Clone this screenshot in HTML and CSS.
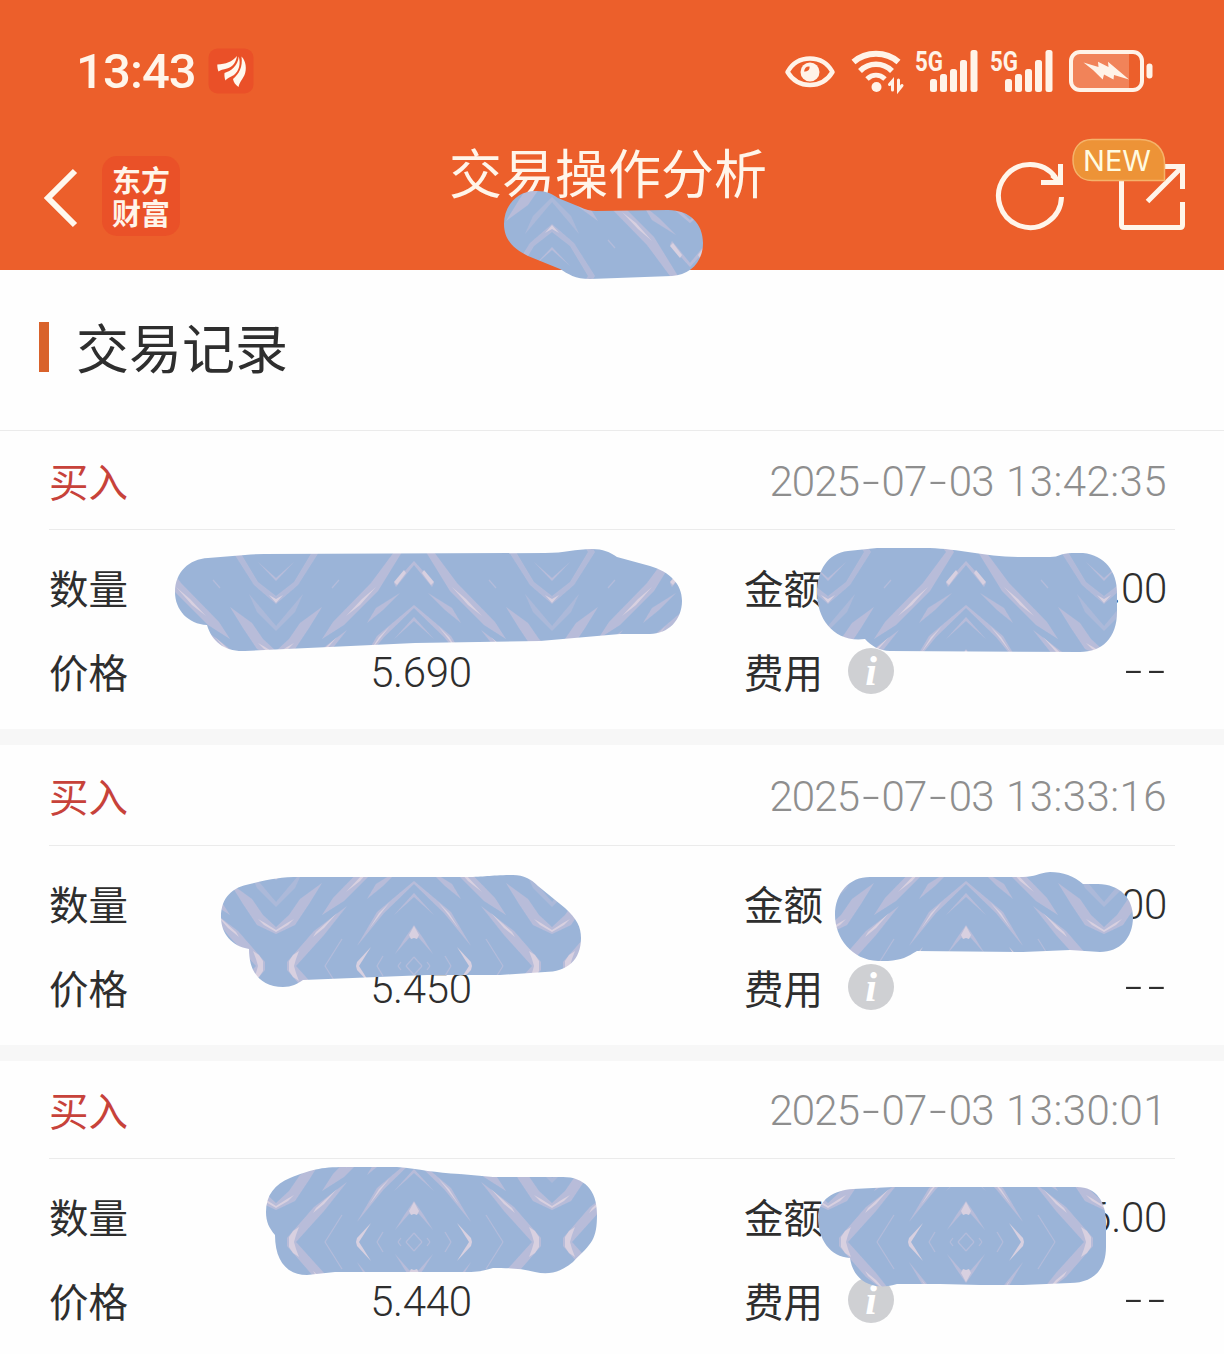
FILE: index.html
```html
<!DOCTYPE html>
<html lang="zh-CN">
<head>
<meta charset="utf-8">
<title>交易操作分析</title>
<link rel="stylesheet" href="styles.css">
</head>
<body>
<div class="screen">
  <header class="header">
    <div class="status">
      <span class="clock">13:43</span>
      <svg class="app-badge" width="46" height="46" viewBox="0 0 46 46"><rect width="45" height="45" x=".5" y=".5" rx="9" fill="#ea5028"/><g fill="#fff8ee"><path d="M9.300 16.500C18 16 24 14 29 8C28 14 25 19 19 20.500C15 21.500 12.500 22 10.500 23.500C9.500 21 9.300 19 9.300 16.500Z"/><path d="M16.500 25C23 23 30 18 30.700 8.500C33 16 31 23 26 27C22 29.500 19 30 17.500 32.500C16.500 30 16.300 27.500 16.500 25Z"/><path d="M25 31C31 26 35 19 33.500 8.500C38 13 39 21 36.500 27C34.500 31.500 31.500 34 30.500 39C27.500 37 25.500 34 25 31Z"/></g></svg>
      <svg class="indicators" width="370" height="46" viewBox="0 0 370 46">
        <g fill="none" stroke="#fff3e8" stroke-linecap="round">
          <path d="M3.500 24C9 14 17 10.500 26 10.500S43 14 48.500 24C43 33 35 37 26 37S9 33 3.500 24Z" stroke-width="4.500" stroke-linejoin="round"/>
          <path d="M69.500 14C82 3 102 3 114.500 14" stroke-width="6" stroke-linecap="butt"/>
          <path d="M76 23C85 14 99 14 108 23" stroke-width="5.500" stroke-linecap="butt"/>
          <path d="M83 31C88.500 26 95.500 26 101 31" stroke-width="5" stroke-linecap="butt"/>
          <path d="M108.500 42V33L105.500 36.500M114.500 32V42L118 37.500" stroke-width="3"/>
        </g>
        <g fill="#fff3e8">
          <circle cx="26" cy="24" r="9.500"/><circle cx="92.500" cy="39" r="5"/>
          <rect x="146" y="31" width="7" height="13" rx="2.500"/><rect x="156" y="26" width="7" height="18" rx="2.500"/><rect x="166" y="21" width="7" height="23" rx="2.500"/><rect x="176" y="12" width="7" height="32" rx="2.500"/><rect x="186.500" y="2" width="7" height="42" rx="2.500"/>
          <rect x="221" y="31" width="7" height="13" rx="2.500"/><rect x="231" y="26" width="7" height="18" rx="2.500"/><rect x="241" y="21" width="7" height="23" rx="2.500"/><rect x="251" y="12" width="7" height="32" rx="2.500"/><rect x="261.500" y="2" width="7" height="42" rx="2.500"/>
        </g>
        <path d="M20 23.500C20.500 20 22.500 18 25.500 18.500C26 21.500 24 23.500 20 23.500Z" fill="#ec5f2b"/>
        <text class="net" x="131" y="22.500" textLength="28" lengthAdjust="spacingAndGlyphs">5G</text>
        <text class="net" x="206" y="22.500" textLength="28" lengthAdjust="spacingAndGlyphs">5G</text>
        <rect x="287" y="6" width="58" height="34" fill="#f18359"/>
        <rect x="287" y="4" width="71" height="38" rx="9" fill="none" stroke="#fff3e8" stroke-width="4"/>
        <rect x="362.500" y="15.500" width="6" height="15" rx="3" fill="#fff3e8"/>
        <path d="M299.500 14.500L314.500 19L314 13.700L324.500 19L324 13.700L335 23L345 31.500L330 27L329.500 31.500L320 26.500L318.700 31.500L309 22Z" fill="#fff3e8"/>
      </svg>
    </div>
    <div class="nav">
      <svg class="back" width="36" height="60" viewBox="0 0 36 60"><path d="M33 3L6 30L33 57" fill="none" stroke="#fff8ee" stroke-width="6"/></svg>
      <div class="logo"><span>东方</span><span>财富</span></div>
      <h1 class="title">交易操作分析</h1>
      <svg class="actions" width="216" height="110" viewBox="0 0 216 110">
        <g fill="none" stroke="#fff5ea" stroke-width="5">
          <path d="M75.500 38.500A31.500 31.500 0 1 0 81.500 58"/>
          <path d="M80.500 25V43.500H61M72 36L80 43"/>
          <path d="M141.500 42V86Q141.500 88.500 144 88.500H200Q202.500 88.500 202.500 86V63"/>
          <path d="M178 27.500H202.500V50M201 29L167.500 62.500"/>
        </g>
        <path d="M112 .5H160C176 .5 184.500 11 184.500 24V41.500H112C99 41.500 93 32 93 21S99 .5 112 .5Z" fill="#ed9337" stroke="#f5b36a" stroke-width="1.500"/>
        <text class="new" x="103" y="32" textLength="68" lengthAdjust="spacingAndGlyphs">NEW</text>
      </svg>
    </div>
  </header>

  <h2 class="section"><i class="bar"></i><span>交易记录</span></h2>

  <main class="records">
    <article class="record">
      <div class="record-head"><span class="side">买入</span><time>2025<b>-</b>07<b>-</b>03 <span class="clock-part">13:42:35</span></time></div>
      <dl class="fields">
        <dt>数量</dt><dd class="mid"></dd><dt>金额</dt><dd class="end">.00</dd>
        <dt>价格</dt><dd class="mid">5.690</dd><dt>费用<i class="info">i</i></dt><dd class="end none"><b>-</b><b>-</b></dd>
      </dl>
    </article>
    <article class="record">
      <div class="record-head"><span class="side">买入</span><time>2025<b>-</b>07<b>-</b>03 <span class="clock-part">13:33:16</span></time></div>
      <dl class="fields">
        <dt>数量</dt><dd class="mid"></dd><dt>金额</dt><dd class="end">.00</dd>
        <dt>价格</dt><dd class="mid">5.450</dd><dt>费用<i class="info">i</i></dt><dd class="end none"><b>-</b><b>-</b></dd>
      </dl>
    </article>
    <article class="record">
      <div class="record-head"><span class="side">买入</span><time>2025<b>-</b>07<b>-</b>03 <span class="clock-part">13:30:01</span></time></div>
      <dl class="fields">
        <dt>数量</dt><dd class="mid"></dd><dt>金额</dt><dd class="end">6.00</dd>
        <dt>价格</dt><dd class="mid">5.440</dd><dt>费用<i class="info">i</i></dt><dd class="end none"><b>-</b><b>-</b></dd>
      </dl>
    </article>
  </main>

  <!-- brush strokes that hide private values, all filled from one mirrored tile -->
  <svg class="brush" width="1224" height="1354" viewBox="0 0 1224 1354">
    <defs>
      <g id="q">
        <g fill="#bbbdda" opacity=".9">
          <path d="M0 129L20 107L18 103L0 125Z"/>
          <path d="M12 138L20 138L43 107L81 68L92 51L70 65L36 99Z"/>
          <path d="M14 97L38 82L47 67L31 80Z"/>
          <path d="M0 85L37 54L57 20L30 53L0 82Z"/>
          <path d="M0 73L20 51L0 69Z"/>
          <path d="M67 60L100 35L127 4L127 0L118 0L90 31Z"/>
          <path d="M92 83L114 67L125 51L138 39L138 32L119 41L105 62Z"/>
          <path d="M111 96L138 64L138 59L119 78Z" opacity=".6"/>
          <path d="M95 138L102 138L120 108L138 94L138 86L116 105Z" opacity=".8"/>
          <path d="M120 128L138 112L138 109Z"/>
          <path d="M0 41L9 28L19 12L5 28L0 30Z"/>
        </g>
        <g fill="none" stroke="#bbbdda" stroke-width="1.200" opacity=".75">
          <path d="M0 9L8 0M13 4L16 0M31 10L37 0M72 27L89 0M75 110L82 102"/>
        </g>
        <g fill="#d8d0e0">
          <path d="M10 120L20 108L17 105L8 117Z"/><path d="M38 103L52 91L68 74L54 85Z"/><path d="M0 40L5 31L3 27L0 28Z"/><path d="M24 64L35 53L45 37L32 54Z"/><path d="M77 53L98 34L101 29L90 38Z"/><path d="M115 15L121 11L125 5L125 0L120 0L118 7Z"/><path d="M43 19L57 4L58 0L55 0Z"/><path d="M120 47L127 43L138 36L138 34L126 41Z"/><path d="M131 95L138 91L138 87Z"/>
        </g>
      </g>
      <pattern id="marble" width="276" height="276" patternUnits="userSpaceOnUse">
        <rect width="276" height="276" fill="#9bb4d8"/>
        <g transform="translate(138 138)"><use href="#q"/><use href="#q" transform="scale(-1 1)"/><use href="#q" transform="scale(1 -1)"/><use href="#q" transform="scale(-1 -1)"/></g>
      </pattern>
    </defs>
    <g fill="url(#marble)">
      <path d="M504 224C504 205 518 190 537 191C547 191 552 194 558 198L580 207Q588 211 596 211L668 210C690 210 703 224 703 243C703 262 690 275 672 276L590 279C575 279 568 274 560 269L528 256C514 249 504 240 504 224Z"/>
      <path d="M175 592C175 572 189 559 208 558L245 555Q255 554 264 554L545 553C565 553 575 549 592 549C603 549 610 552 617 557L650 566C670 572 682 584 682 601C682 620 668 634 650 634L620 634L540 641L415 643L245 651C225 652 212 642 207 625C188 624 175 610 175 592Z"/>
      <path d="M817 593C817 570 828 553 848 551L877 548H930C960 549 985 557 1023 557H1050C1060 557 1060 553 1072 553H1083C1105 555 1117 572 1117 592V612C1117 638 1102 652 1080 652L890 651C880 651 871 646 865 639C835 643 817 620 817 593Z"/>
      <path d="M221 917C221 897 233 887 250 884C270 879 280 877 300 877H467C485 877 490 875 513 875C524 875 531 879 538 886L565 908C577 919 581 927 581 938C581 960 567 972 545 972L500 975H427L303 980C297 984 292 987 283 987C262 987 249 974 249 949C232 946 221 934 221 917Z"/>
      <path d="M835 915C835 893 849 877 870 877H1023C1035 877 1038 873 1050 872C1063 872 1074 876 1083 884H1098C1120 884 1133 899 1133 917C1133 938 1120 952 1100 952L1070 950L1023 952L917 951C907 957 902 960 888 961H878C852 960 835 938 835 915Z"/>
      <path d="M266 1212C266 1195 275 1184 290 1178C310 1170 320 1167 345 1167L397 1167C420 1169 435 1173 460 1174L493 1177H563C584 1177 597 1190 597 1214C597 1240 592 1243 573 1262C560 1273 548 1275 535 1272C520 1268 505 1268 493 1268C480 1272 475 1272 460 1272H335L307 1275C287 1275 275 1261 275 1235C269 1228 266 1222 266 1212Z"/>
      <path d="M818 1217C818 1200 834 1190 853 1189L893 1187H1077C1097 1187 1106 1203 1106 1222V1247C1106 1270 1093 1283 1070 1283L1023 1285H980L940 1284H897C890 1286 885 1287 876 1286C860 1283 852 1272 850 1258C830 1257 818 1239 818 1217Z"/>
    </g>
  </svg>
</div>
</body>
</html>
```
FILE: styles.css
```css
* { box-sizing: border-box; margin: 0; padding: 0; }
body {
  width: 1224px;
  height: 1354px;
  overflow: hidden;
  background: #fff;
  color: #2e2e2e;
  font-family: Roboto, "Noto Sans CJK SC", sans-serif;
}
.screen { position: relative; height: 1354px; background: #fefefe; }

.header { height: 270px; background: #ec5f2b; color: #fff5ea; }
.status { display: flex; align-items: flex-start; height: 96px; padding: 48px 70px 0 76px; }
.clock { width: 132px; font-size: 49px; font-weight: 500; line-height: 48px; letter-spacing: -0.9px; }
.app-badge { flex: none; }
.indicators { margin-left: auto; flex: none; overflow: visible; }
.net { font: 700 27px Roboto, sans-serif; fill: #fff3e8; }
.nav { display: flex; align-items: flex-start; height: 174px; padding-left: 42px; }
.back { flex: none; margin-top: 72px; }
.logo {
  display: flex;
  flex-direction: column;
  flex: none;
  width: 78px;
  height: 80px;
  margin: 60px 0 0 24px;
  padding-top: 7px;
  border-radius: 15px;
  background: #ea5128;
  text-align: center;
  font: 700 29px/33px "Noto Sans CJK SC", sans-serif;
}
.title { margin: 43px 0 0 269px; font: 400 53px/64px "Noto Sans CJK SC", sans-serif; white-space: nowrap; }
.actions { margin: 43px 28px 0 auto; flex: none; overflow: visible; }
.new { font: 400 29px Inter, sans-serif; fill: #fffbe0; }

.section {
  display: flex;
  align-items: center;
  height: 161px;
  padding: 0 0 6px 39px;
  border-bottom: 1px solid #ebebeb;
  font: 400 53px/64px "Noto Sans CJK SC", sans-serif;
}
.section span { margin-top: -2px; }
.bar { width: 10px; height: 50px; margin-right: 27px; background: #d9622b; }

.records { display: flex; flex-direction: column; gap: 16px; background: #f7f7f7; }
.record { padding: 0 49px; background: #fefefe; }
.record-head {
  display: flex;
  align-items: center;
  justify-content: space-between;
  height: 99px;
  padding: 4px 8px 0 0;
  border-bottom: 1px solid #ebebeb;
}
.record:nth-child(2) .record-head { height: 101px; }
.record:nth-child(3) .record-head { height: 98px; padding-top: 3px; }
.side { margin-top: -5px; color: #c7423a; font: 400 39.5px/56px "Noto Sans CJK SC", sans-serif; }
time { color: #8e8e8e; font-size: 42px; font-weight: 300; line-height: 50px; letter-spacing: -0.9px; word-spacing: 3px; }
.clock-part { letter-spacing: 0.45px; }
time b, .none b { display: inline-block; width: 22.5px; font-weight: inherit; text-align: center; transform: scaleX(1.5); }
.none b { position: relative; top: -2px; }
.fields {
  display: grid;
  grid-template-columns: 79px 586px 180px 273px;
  grid-auto-rows: 84px;
  align-items: center;
  height: 199px;
  padding-top: 17px;
}
dt { display: flex; align-items: center; margin-top: -4px; white-space: nowrap; font: 400 39.5px/56px "Noto Sans CJK SC", sans-serif; }
dt:nth-of-type(even) { margin-left: 30px; }
dd { font-size: 42px; font-weight: 300; line-height: 50px; letter-spacing: -0.3px; }
.mid { text-align: center; }
.end { text-align: right; }
.info {
  display: flex;
  justify-content: center;
  width: 46px;
  height: 46px;
  margin: 0 0 0 25px;
  border-radius: 50%;
  background: #cfd0d3;
  color: #fff;
  font: italic 700 42px/47px "Liberation Serif", serif;
}
.brush { position: absolute; inset: 0; pointer-events: none; }
```
